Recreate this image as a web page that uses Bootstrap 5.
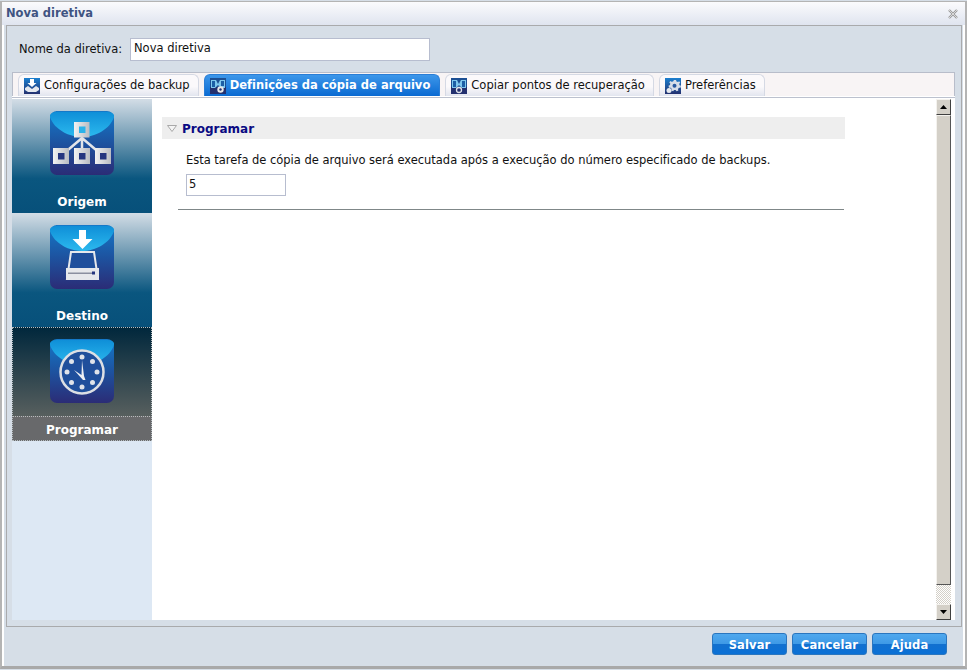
<!doctype html>
<html lang="pt">
<head>
<meta charset="utf-8">
<title>Nova diretiva</title>
<link href="https://cdn.jsdelivr.net/npm/bootstrap@5.3.0/dist/css/bootstrap.min.css" rel="stylesheet">
<style>
html,body{height:100%;}
body{margin:0;background:#d6dee7;font-family:"DejaVu Sans",sans-serif;font-size:11px;color:#111;overflow:hidden;padding-top:1px;}
.win{width:967px;height:668px;border:1px solid #b4b4b4;border-left-width:2px;border-right-width:2px;border-bottom:3px solid #a9a9a9;background:#d6dee7;box-shadow:inset 2px 0 0 #fff,inset -2px 0 0 #fff;}
.win-head{height:23px;background:linear-gradient(#fbfbfd,#dfe4ef);padding:0 7px 0 4px;}
.win-title{font-weight:700;color:#3f5482;font-size:11.5px;}
.win-body{margin:0 3px 0 4px;height:602px;border:1px solid #a9aaac;padding:12px 5px 6px 5px;}
.name-row{height:23px;padding-left:7px;margin-bottom:11px;}
.name-row label{width:111px;font-size:11.5px;}
.txt{height:23px;border:1px solid #b7bdcf;background:#fff;padding:0 0 3px 3px;font:11.5px "DejaVu Sans",sans-serif;color:#111;outline:0;border-radius:0;}
.txt-name{width:300px;}
.txt-num{width:100px;height:22px;padding:0 0 2px 2px;}
.tab-strip{height:24px;background:#f8f4f5;border:1px solid #b8bdca;border-bottom:0;padding:1px 0 0 5px;gap:5px;align-items:stretch;margin-right:1px;}
.tb{height:22px;border:1px solid #d5d9e4;border-bottom:0;border-radius:6px 6px 0 0;background:linear-gradient(#fbf9fb 55%,#e2e5ef);padding:0 8px 0 5px;gap:4px;font-size:11.5px;white-space:nowrap;color:#111;}
.tb.on{background:linear-gradient(#3d97ea,#0a6ad2);border-color:#2b7ed6;color:#fff;font-weight:700;padding-right:9px;letter-spacing:.003em;}
.panel-line{height:1px;background:#fff;margin-right:1px;}
.panel-box{height:523px;border-top:1px solid #bcc1ce;padding-top:1px;background:#fff;margin-right:1px;}
.side{width:140px;height:521px;background:#dde8f4;flex:none;}
.side-item{height:114px;background:linear-gradient(#d3dde6 0,#0a567f 70%,#07507a 100%);padding-top:12px;color:#fff;font-weight:700;font-size:12px;text-align:center;}
.side-item svg{display:block;margin:0 auto;}
.side-lab{margin-top:19px;line-height:16px;}
.side-item.act{background:linear-gradient(#00273c,#575f5e 78%);outline:1px dotted #b5bcc0;outline-offset:-1px;position:relative;}
.act .side-lab{margin:0;height:25px;padding-top:5px;margin-top:13px;background:#68696b;border-top:1px dotted #b9bcbd;}
.main{padding:18px 0 0 10px;}
.sec-head{width:683px;height:22px;background:#eeeeee;padding:1px 0 0 5px;gap:5px;color:#0a0a82;font-weight:700;font-size:12px;}
.sec-text{padding:14px 0 0 24px;font-size:11.5px;line-height:14px;white-space:nowrap;letter-spacing:-.002em;}
.sec-input{padding:7px 0 0 24px;}
.sec-rule{width:666px;margin:13px 0 0 16px;height:1px;background:#7f8788;}
.sb{width:15px;height:521px;flex:none;margin-right:4px;background:repeating-conic-gradient(#d4d0c8 0 25%,#fff 0 50%) 0 0/2px 2px;}
.sb-btn{height:16px;background:#d4d0c8;border:1px solid;border-color:#f4f2ee #404040 #404040 #f4f2ee;}
.sb-thumb{height:470px;background:#d4d0c8;border:1px solid;border-color:#f4f2ee #555 #555 #f4f2ee;}
.sb-gap{flex:1;}
.foot{padding:6px 18px 0 0;gap:5px;}
.act-btn{width:75px;height:22px;border:1px solid #2a76bf;border-radius:3px;background:linear-gradient(#4fa8ee 0,#3f9ae6 48%,#1270cf 52%,#0a70d6 100%);color:#fff;font:700 11.5px "DejaVu Sans",sans-serif;letter-spacing:.01em;padding:2px 0 0;}
</style>
</head>
<body>
<div class="win">
  <div class="win-head d-flex align-items-center justify-content-between">
    <span class="win-title">Nova diretiva</span>
    <svg width="10" height="10" viewBox="0 0 10 10"><path d="M1 1l8 8M9 1L1 9" stroke="#9a9a9a" stroke-width="2.400"/><path d="M1 1l8 8M9 1L1 9" stroke="#f4f4f4" stroke-width=".7"/></svg>
  </div>
  <div class="win-body">
    <div class="name-row d-flex align-items-center">
      <label>Nome da diretiva:</label>
      <input class="txt txt-name" value="Nova diretiva">
    </div>
    <div class="tab-strip d-flex">
      <div class="tb d-flex align-items-center">
        <svg width="16" height="16" viewBox="0 0 16 16"><defs><linearGradient id="t" x1="0" y1="0" x2="0" y2="1"><stop offset="0" stop-color="#1b7fcf"/><stop offset="1" stop-color="#23306f"/></linearGradient></defs><rect width="16" height="16" fill="url(#t)"/><path d="M6 1h4v4h2.500L8 9 3.500 5H6z" fill="#fff"/><path d="M1 10l3-2 4 3 4-3 3 2v2l-3 2H4l-3-2z" fill="#e4e8ee"/></svg>
        <span>Configurações de backup</span>
      </div>
      <div class="tb on d-flex align-items-center">
        <svg width="16" height="16" viewBox="0 0 16 16"><rect width="16" height="16" fill="#1c4f93"/><rect y="9" width="16" height="7" fill="#23306f"/><path d="M1 2h5l2 4 2-4h5v8h-4L8 7 5 10H1z" fill="#7fc7ee"/><path d="M2 3h3v6H2zM11 3h3v5h-3z" fill="#1c5ea5"/><circle cx="10.500" cy="11.500" r="3.200" fill="#e8e8e8"/><circle cx="10.500" cy="11.500" r="1.200" fill="#23306f"/></svg>
        <span>Definições da cópia de arquivo</span>
      </div>
      <div class="tb d-flex align-items-center">
        <svg width="16" height="16" viewBox="0 0 16 16"><rect width="16" height="16" fill="#1c4f93"/><rect y="9" width="16" height="7" fill="#23306f"/><path d="M1 2h5l2 4 2-4h5v8h-4L8 7 5 10H1z" fill="#7fc7ee"/><path d="M2 3h3v6H2zM11 3h3v6h-3z" fill="#1c5ea5"/><circle cx="8" cy="12" r="2.500" fill="none" stroke="#dfe3ea" stroke-width="1.300"/></svg>
        <span>Copiar pontos de recuperação</span>
      </div>
      <div class="tb d-flex align-items-center">
        <svg width="16" height="16" viewBox="0 0 16 16"><rect width="16" height="16" fill="url(#t)"/><path d="M9 2l2 0 .5 1.500 1.500.5 1.200-.8 1 1.500-1 1 .3 1.500 1.500.6-.5 2-1.500-.1-1 1.200.4 1.500-1.800.9-1-1.200-1.500 0-1 1.200-1.800-.9.4-1.500-1-1.200L4 9.700l-.5-2L5 7l.3-1.500-1-1 1-1.500 1.200.8L8 3.500z" fill="#d8dee8"/><circle cx="9.500" cy="7.800" r="2" fill="#2a5a9f"/><circle cx="4" cy="12.500" r="2.500" fill="#e6e9ee"/></svg>
        <span>Preferências</span>
      </div>
    </div>
    <div class="panel-line"></div>
    <div class="panel-box d-flex">
      <div class="side">
        <div class="side-item">
          <svg width="64" height="64" viewBox="0 0 64 64"><defs>
            <linearGradient id="g" x1="0" y1="0" x2="0" y2="1"><stop offset="0" stop-color="#1479c9"/><stop offset=".5" stop-color="#1d53a0"/><stop offset="1" stop-color="#2b2c76"/></linearGradient>
            <linearGradient id="d" x1="0" y1="0" x2="0" y2="1"><stop offset="0" stop-color="#0f8fd8"/><stop offset="1" stop-color="#2cb9ee"/></linearGradient>
            <linearGradient id="s" x1="0" y1="0" x2="1" y2="0"><stop offset="0" stop-color="#f2f2f2"/><stop offset="1" stop-color="#b9bcc2"/></linearGradient></defs>
            <rect width="64" height="64" rx="7" fill="url(#g)"/><path d="M0 4a7 4 0 0 1 7-3h50a7 4 0 0 1 7 3v2C60 18 46 26 32 26S4 18 0 6z" fill="url(#d)"/>
            <path d="M32 24v20M32 27L12 44M32 27l20 17" stroke="#e3e5e9" stroke-width="2.500" fill="none"/>
            <rect x="24" y="11" width="15.500" height="15.500" fill="url(#s)"/><rect x="29" y="15.500" width="6.500" height="6.500" fill="#2bb3ea"/>
            <g fill="url(#s)"><rect x="3" y="37" width="16" height="16"/><rect x="24" y="37" width="16" height="16"/><rect x="45" y="37" width="16" height="16"/></g>
            <g fill="#25357f"><rect x="8" y="42" width="6.500" height="6.500"/><rect x="29" y="42" width="6.500" height="6.500"/><rect x="50" y="42" width="6.500" height="6.500"/></g></svg>
          <div class="side-lab">Origem</div>
        </div>
        <div class="side-item">
          <svg width="64" height="64" viewBox="0 0 64 64"><rect width="64" height="64" rx="7" fill="url(#g)"/><path d="M0 4a7 4 0 0 1 7-3h50a7 4 0 0 1 7 3v2C60 18 46 26 32 26S4 18 0 6z" fill="url(#d)"/>
            <path d="M29 5h7v9h6.500L32.500 24l-10-10H29z" fill="#fff"/>
            <path d="M21 27h23l4 27H17z" fill="#1f4f9c" stroke="#e6e8ec" stroke-width="2"/><rect x="16" y="43" width="33" height="12" fill="#e6e8ec"/><rect x="18" y="47.500" width="26" height="1.500" fill="#8a8fa0"/><rect x="42" y="46.500" width="3" height="3" fill="#25357f"/></svg>
          <div class="side-lab">Destino</div>
        </div>
        <div class="side-item act">
          <svg width="64" height="64" viewBox="0 0 64 64"><rect width="64" height="64" rx="7" fill="url(#g)"/><path d="M0 4a7 4 0 0 1 7-3h50a7 4 0 0 1 7 3v2C60 18 46 26 32 26S4 18 0 6z" fill="url(#d)"/>
            <circle cx="32" cy="33" r="21.500" fill="#1f4f9c" stroke="#dcdfe4" stroke-width="2.500"/>
            <g fill="#dfe3ea"><circle cx="32" cy="18" r="2.500"/><circle cx="32" cy="48" r="2.500"/><circle cx="17" cy="33" r="2.500"/><circle cx="47" cy="33" r="2.500"/><circle cx="21.500" cy="22.500" r="2.500"/><circle cx="42.500" cy="22.500" r="2.500"/><circle cx="21.500" cy="43.500" r="2.500"/><circle cx="42.500" cy="43.500" r="2.500"/></g>
            <path d="M32 21l2 16 1.500 4h-2.500L24 31l7.500 5z" fill="#eef0f3"/></svg>
          <div class="side-lab">Programar</div>
        </div>
      </div>
      <div class="main flex-grow-1">
        <div class="sec-head d-flex align-items-center">
          <svg width="10" height="7" viewBox="0 0 10 7"><path d="M.5.5h9L5 6.500z" fill="#f4f4f4" stroke="#a9a9a9"/></svg>
          <span>Programar</span>
        </div>
        <div class="sec-text">Esta tarefa de cópia de arquivo será executada após a execução do número especificado de backups.</div>
        <div class="sec-input"><input class="txt txt-num" value="5"></div>
        <div class="sec-rule"></div>
      </div>
      <div class="sb d-flex flex-column">
        <div class="sb-btn d-flex align-items-center justify-content-center"><svg width="7" height="4" viewBox="0 0 7 4"><path d="M3.500 0L7 4H0z" fill="#000"/></svg></div>
        <div class="sb-thumb"></div>
        <div class="sb-gap"></div>
        <div class="sb-btn d-flex align-items-center justify-content-center"><svg width="7" height="4" viewBox="0 0 7 4"><path d="M0 0h7L3.500 4z" fill="#000"/></svg></div>
      </div>
    </div>
  </div>
  <div class="foot d-flex justify-content-end">
    <button class="act-btn" type="button">Salvar</button>
    <button class="act-btn" type="button">Cancelar</button>
    <button class="act-btn" type="button">Ajuda</button>
  </div>
</div>
</body>
</html>
